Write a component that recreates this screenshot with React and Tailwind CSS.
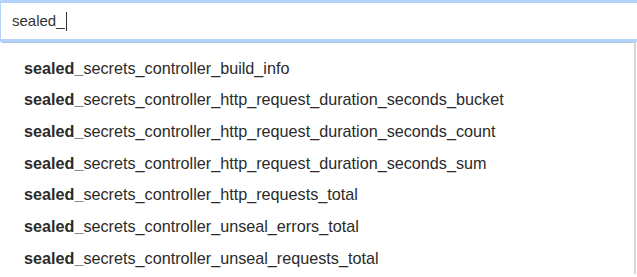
import { useState } from 'react'

const metricas = [
  'secrets_controller_build_info',
  'secrets_controller_http_request_duration_seconds_bucket',
  'secrets_controller_http_request_duration_seconds_count',
  'secrets_controller_http_request_duration_seconds_sum',
  'secrets_controller_http_requests_total',
  'secrets_controller_unseal_errors_total',
  'secrets_controller_unseal_requests_total',
]

export default function App() {
  const [busqueda] = useState('sealed_')

  return (
    <div className="w-[637px] h-[277px] bg-white overflow-hidden text-[#333]" style={{ fontFamily: '"Liberation Sans", Arial, sans-serif' }}>
      {/* campo de búsqueda con foco */}
      <div className="h-[42px] border-t-[3px] border-b-[3px] border-l border-[#b4d3fa] flex items-center pl-[11px]">
        <span className="text-[15px] text-[#333]">{busqueda}</span>
        <span className="w-px h-[19px] bg-[#333] ml-px" />
      </div>

      {/* lista de sugerencias */}
      <ul className="ml-[2px] mr-[1px] border-t border-r-2 border-[#d6d6d6] border-t-[#a9c4e6] pt-[9px]">
        {metricas.map((m, idx) => (
          <li key={idx} className="h-[31.7px] flex items-center pl-[22px] text-[16.2px] text-[#2b2b2b]">
            <span className="font-bold">sealed_</span>
            <span>{m}</span>
          </li>
        ))}
      </ul>
    </div>
  )
}
